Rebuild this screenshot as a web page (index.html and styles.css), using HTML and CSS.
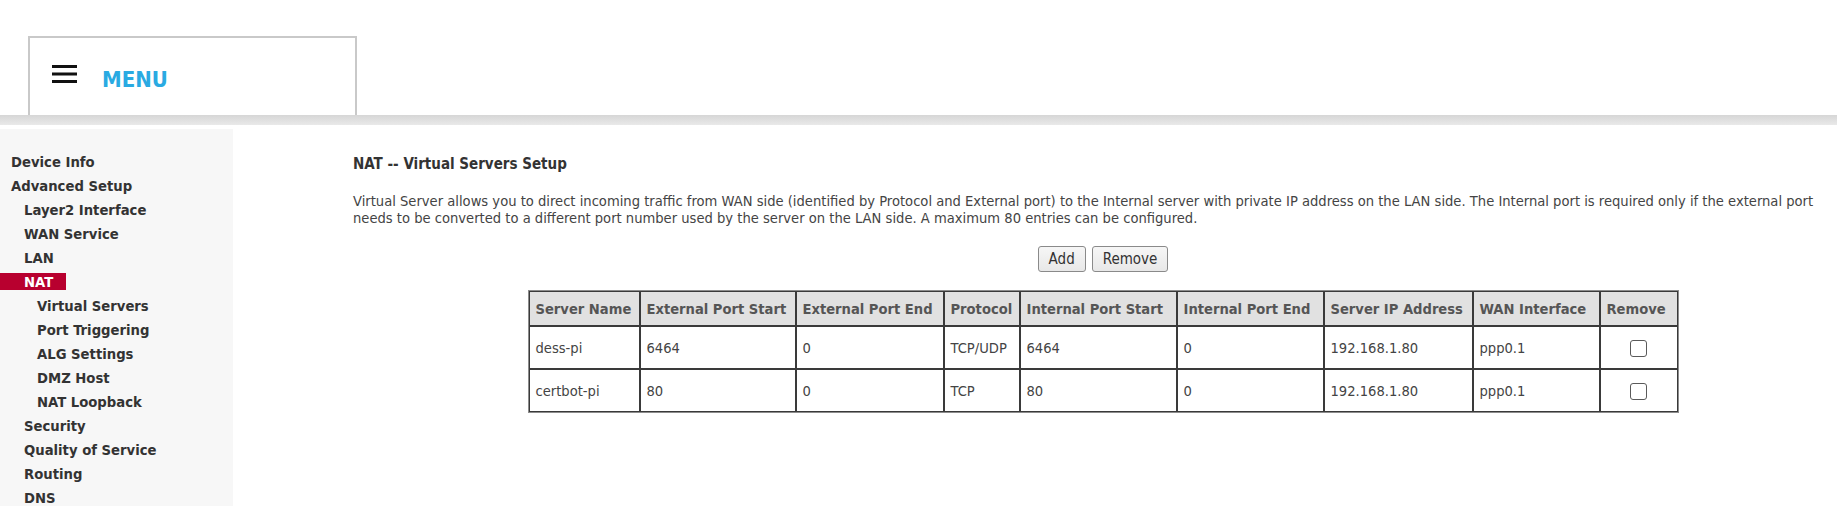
FILE: index.html
```html
<!DOCTYPE html>
<html>
<head>
<meta charset="utf-8">
<title>NAT -- Virtual Servers Setup</title>
<link rel="stylesheet" href="styles.css">
</head>
<body>
<header class="top">
  <div class="menu-box">
    <svg class="burger" width="25" height="18" viewBox="0 0 25 18"><rect x="0" y="0" width="25" height="3" fill="#111"/><rect x="0" y="7.5" width="25" height="3" fill="#111"/><rect x="0" y="15" width="25" height="3" fill="#111"/></svg>
    <span class="menu-label">MENU</span>
  </div>
</header>
<div class="band"></div>
<div class="page">
  <nav class="side">
    <div class="item l0"><a>Device Info</a></div>
    <div class="item l0"><a>Advanced Setup</a></div>
    <div class="item l1"><a>Layer2 Interface</a></div>
    <div class="item l1"><a>WAN Service</a></div>
    <div class="item l1"><a>LAN</a></div>
    <div class="item l1"><a class="active">NAT</a></div>
    <div class="item l2"><a>Virtual Servers</a></div>
    <div class="item l2"><a>Port Triggering</a></div>
    <div class="item l2"><a>ALG Settings</a></div>
    <div class="item l2"><a>DMZ Host</a></div>
    <div class="item l2"><a>NAT Loopback</a></div>
    <div class="item l1"><a>Security</a></div>
    <div class="item l1"><a>Quality of Service</a></div>
    <div class="item l1"><a>Routing</a></div>
    <div class="item l1"><a>DNS</a></div>
  </nav>
  <main class="main">
    <h1 class="title">NAT -- Virtual Servers Setup</h1>
    <p class="desc">Virtual Server allows you to direct incoming traffic from WAN side (identified by Protocol and External port) to the Internal server with private IP address on the LAN side. The Internal port is required only if the external port needs to be converted to a different port number used by the server on the LAN side. A maximum 80 entries can be configured.</p>
    <div class="actions">
      <button class="btn">Add</button>
      <button class="btn">Remove</button>
    </div>
    <div class="table-wrap">
      <table class="vs">
        <thead>
          <tr>
            <th class="c1">Server Name</th>
            <th class="c2">External Port Start</th>
            <th class="c3">External Port End</th>
            <th class="c4">Protocol</th>
            <th class="c5">Internal Port Start</th>
            <th class="c6">Internal Port End</th>
            <th class="c7">Server IP Address</th>
            <th class="c8">WAN Interface</th>
            <th class="c9">Remove</th>
          </tr>
        </thead>
        <tbody>
          <tr>
            <td>dess-pi</td><td>6464</td><td>0</td><td>TCP/UDP</td><td>6464</td><td>0</td><td>192.168.1.80</td><td>ppp0.1</td><td class="chk"><input type="checkbox"></td>
          </tr>
          <tr>
            <td>certbot-pi</td><td>80</td><td>0</td><td>TCP</td><td>80</td><td>0</td><td>192.168.1.80</td><td>ppp0.1</td><td class="chk"><input type="checkbox"></td>
          </tr>
        </tbody>
      </table>
    </div>
  </main>
</div>
</body>
</html>
```

FILE: styles.css
```css
html, body {
  margin: 0;
  padding: 0;
  background: #fff;
  overflow: hidden;
}
body {
  font-family: "DejaVu Sans Condensed", "DejaVu Sans", sans-serif;
  color: #333;
  width: 1837px;
  height: 506px;
}
.top {
  height: 115px;
  display: flex;
  align-items: flex-end;
  padding-left: 28px;
}
.menu-box {
  box-sizing: border-box;
  width: 329px;
  height: 79px;
  border: 2px solid #c9c9c9;
  border-bottom: none;
  display: flex;
  align-items: flex-start;
  padding: 27px 0 0 22px;
}
.burger {
  display: block;
  flex: none;
}
.menu-label {
  margin-left: 25px;
  margin-top: 4px;
  font-family: "DejaVu Sans Condensed", sans-serif;
  font-weight: bold;
  font-size: 22px;
  line-height: 22px;
  color: #2aaae2;
}
.band {
  height: 10px;
  background: linear-gradient(#d6d6d6, #e9e9e9);
  margin-bottom: 4px;
}
.page {
  display: flex;
  height: 377px;
}
.side {
  width: 233px;
  flex: none;
  background: #f7f7f7;
  padding-top: 20px;
  box-sizing: border-box;
}
.item {
  height: 24px;
  display: flex;
  align-items: center;
}
.item a {
  display: inline-block;
  font-weight: bold;
  font-size: 14.7px;
  line-height: 17px;
  color: #333;
  padding-right: 6px;
  white-space: nowrap;
}
.l0 a { padding-left: 11px; }
.l1 a { padding-left: 24px; }
.l2 a { padding-left: 37px; }
.item a.active {
  background: #b8002f;
  color: #fff;
  padding-right: 13px;
}
.main {
  padding-left: 120px;
  width: 1500px;
  flex: none;
}
.title {
  margin: 27px 0 0;
  font-size: 15px;
  line-height: 17px;
  font-weight: bold;
  color: #333;
}
.desc {
  margin: 20px 0 0;
  font-size: 14.6px;
  line-height: 16.5px;
  color: #444;
}
.actions {
  display: flex;
  justify-content: center;
  gap: 6px;
  margin-top: 20px;
}
.btn {
  font-family: "DejaVu Sans Condensed", sans-serif;
  font-size: 15px;
  color: #333;
  height: 26px;
  padding: 0 10px;
  background: linear-gradient(#f6f6f6, #e8e8e8);
  border: 1px solid #8a8a8a;
  border-radius: 3px;
}
.table-wrap {
  display: flex;
  justify-content: center;
  margin-top: 18px;
}
.vs {
  border-collapse: separate;
  border-spacing: 0;
  border: 1px solid #8c8c8c;
  font-size: 14.6px;
}
.vs th, .vs td {
  border: 1px solid #3a3a3a;
  text-align: left;
  padding: 0 6px;
  white-space: nowrap;
}
.vs th {
  background: #e1e1e1;
  color: #555;
  font-weight: bold;
  height: 33px;
}
.vs td {
  height: 41px;
  color: #444;
}
.c1 { width: 97px; }
.c2 { width: 142px; }
.c3 { width: 134px; }
.c4 { width: 62px; }
.c5 { width: 143px; }
.c6 { width: 133px; }
.c7 { width: 135px; }
.c8 { width: 113px; }
.c9 { width: 64px; }
.vs td.chk {
  text-align: center;
}
.chk input {
  appearance: none;
  -webkit-appearance: none;
  width: 17px;
  height: 17px;
  margin: 0;
  border: 1px solid #5a5a5a;
  border-radius: 3px;
  background: #fff;
  vertical-align: middle;
}
```
